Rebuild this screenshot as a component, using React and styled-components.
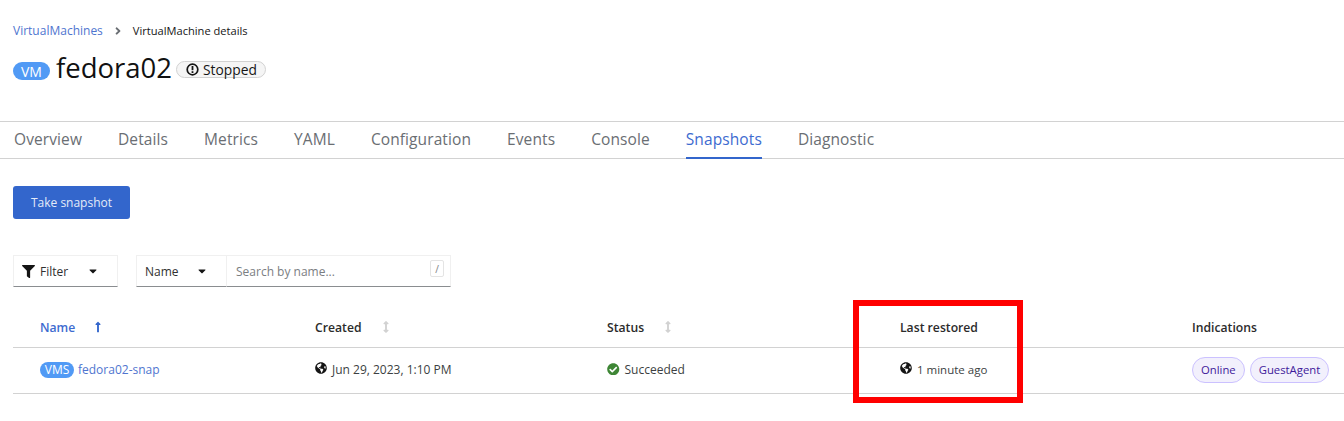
import styled, { createGlobalStyle } from 'styled-components';
import {
  FaAngleRight,
  FaArrowsAltV,
  FaCaretDown,
  FaCheckCircle,
  FaFilter,
  FaGlobeAmericas,
  FaLongArrowAltUp,
} from 'react-icons/fa';

const TABS = ['Overview', 'Details', 'Metrics', 'YAML', 'Configuration', 'Events', 'Console', 'Snapshots', 'Diagnostic'];

const GlobalStyle = createGlobalStyle`
  html, body {
    margin: 0;
    height: 100%;
    overflow: hidden;
    background: #fff;
    font-family: 'Open Sans', 'Liberation Sans', sans-serif;
    color: #151515;
  }
`;

const Page = styled.div`
  position: relative;
  width: 1344px;
  height: 421px;
  overflow: hidden;
`;

const Header = styled.header`
  height: 122px;
  box-sizing: border-box;
  padding: 22px 13px 0;
  border-bottom: 1px solid #d2d2d2;
`;

const Breadcrumb = styled.nav`
  display: flex;
  align-items: center;
  height: 17px;
  font-size: 11.1px;
`;

const CrumbLink = styled.a`
  color: #4f75cf;
  font-size: 12px;
`;

const CrumbSep = styled.span`
  display: flex;
  margin: 0 9px 0 9px;
  color: #6a6e73;
  font-size: 12px;
`;

const TitleRow = styled.div`
  display: flex;
  align-items: center;
  margin-top: 11px;
  height: 36px;
`;

const ResourceBadge = styled.span`
  display: inline-flex;
  align-items: center;
  justify-content: center;
  border-radius: 10px;
  background: #519af5;
  color: #fff;
  font-size: ${(props) => (props.$small ? '12px' : '14px')};
  width: ${(props) => (props.$small ? '34px' : '37px')};
  height: ${(props) => (props.$small ? '16px' : '18px')};
  margin-top: ${(props) => (props.$small ? '0' : '6px')};
`;

const Title = styled.h1`
  margin: 0 4px 0 6px;
  font-size: 27.5px;
  font-weight: 400;
  line-height: 36px;
  color: #111;
`;

const StatusPill = styled.span`
  display: inline-flex;
  align-items: center;
  gap: 4px;
  box-sizing: border-box;
  width: 90px;
  height: 17px;
  margin-top: 3px;
  padding-left: 9px;
  border: 1px solid #d2d2d2;
  border-radius: 9px;
  background: #f5f5f5;
  font-size: 13.8px;
`;

const Tabs = styled.nav`
  display: flex;
  height: 37px;
  box-sizing: border-box;
  padding-left: 14px;
  gap: 36px;
  border-bottom: 1px solid #d2d2d2;
`;

const Tab = styled.a`
  height: 37px;
  box-sizing: border-box;
  line-height: 35px;
  font-size: 15.5px;
  letter-spacing: 0.1px;
  color: ${(props) => (props.$active ? '#3d6bd0' : '#6a6e73')};
  border-bottom: ${(props) => (props.$active ? '2px solid #3366cc' : 'none')};
`;

const Content = styled.main`
  padding: 27px 0 0 13px;
`;

const PrimaryButton = styled.button`
  display: block;
  width: 117px;
  height: 33px;
  padding: 0;
  border: none;
  border-radius: 3px;
  background: #3366cc;
  color: #e4ebf8;
  font-family: inherit;
  font-size: 12px;
`;

const Toolbar = styled.div`
  display: flex;
  margin-top: 36px;
  gap: 18px;
`;

const SelectBox = styled.div`
  display: flex;
  align-items: center;
  box-sizing: border-box;
  height: 32px;
  width: ${(props) => props.$width}px;
  padding-left: ${(props) => props.$pad}px;
  font-size: 12px;
  color: #303030;
  border: 1px solid #f0f0f0;
  border-bottom: 1px solid #8a8d90;
`;

const FilterIcon = styled(FaFilter)`
  color: #151515;
  font-size: 13px;
  margin-right: 5px;
`;

const Caret = styled(FaCaretDown)`
  margin-left: auto;
  margin-right: ${(props) => props.$right}px;
  font-size: 12px;
  color: #151515;
`;

const SearchGroup = styled.div`
  display: flex;
`;

const SearchBox = styled.div`
  display: flex;
  align-items: center;
  justify-content: space-between;
  box-sizing: border-box;
  width: 224px;
  height: 32px;
  padding: 0 6px 0 9px;
  font-size: 12px;
  color: #7b7e82;
  border: 1px solid #f0f0f0;
  border-left: none;
  border-bottom: 1px solid #8a8d90;
`;

const KeyHint = styled.span`
  align-self: flex-start;
  display: flex;
  align-items: center;
  justify-content: center;
  box-sizing: border-box;
  width: 14px;
  height: 17px;
  margin-top: 4px;
  border: 1px solid #e4e4e4;
  border-radius: 2px;
  font-size: 10px;
`;

const TableRow = styled.div`
  display: grid;
  grid-template-columns: 275px 292px 293px 292px 1fr;
  align-items: center;
  box-sizing: border-box;
  height: ${(props) => props.$height}px;
  margin-top: ${(props) => props.$top || 0}px;
  padding-left: 27px;
  border-bottom: 1px solid #d2d2d2;
`;

const HeadCell = styled.div`
  display: flex;
  align-items: center;
  font-size: 12.2px;
  font-weight: 600;
  color: ${(props) => (props.$sorted ? '#3d6bd0' : '#2b2b2b')};
`;

const SortUp = styled(FaLongArrowAltUp)`
  margin-left: 17px;
  font-size: 12px;
  color: #3366cc;
`;

const SortIdle = styled(FaArrowsAltV)`
  margin-left: 18px;
  font-size: 12px;
  color: #d2d2d2;
`;

const BodyCell = styled.div`
  display: flex;
  align-items: center;
  gap: ${(props) => props.$gap || 5}px;
  margin-bottom: 2px;
  font-size: ${(props) => props.$size || 12}px;
  color: #3c3f42;
`;

const SnapLink = styled.a`
  color: #4f75cf;
`;

const Globe = styled(FaGlobeAmericas)`
  font-size: 12px;
  color: #151515;
  margin-bottom: 3px;
`;

const Check = styled(FaCheckCircle)`
  font-size: 12.5px;
  color: #3e8635;
  margin-bottom: 1px;
`;

const Label = styled.span`
  display: inline-flex;
  align-items: center;
  box-sizing: border-box;
  height: 26px;
  padding: 0 8px;
  border: 1px solid #cbc1ff;
  border-radius: 13px;
  background: #f2f0fc;
  color: #40199a;
  font-size: 11.3px;
`;

// red annotation drawn on top of the screenshot
const Highlight = styled.div`
  position: absolute;
  left: 853px;
  top: 300px;
  width: 170px;
  height: 103px;
  box-sizing: border-box;
  border: 6px solid #ff0000;
`;

const StoppedIcon = () => (
  <svg width="13" height="13" viewBox="0 0 13 13">
    <circle cx="6.5" cy="6.5" r="5.3" fill="none" stroke="#151515" strokeWidth="1.7" />
    <rect x="5.6" y="3" width="1.8" height="4.2" fill="#151515" />
    <rect x="5.6" y="8.2" width="1.8" height="1.8" fill="#151515" />
  </svg>
);

export default function App() {
  return (
    <Page>
      <GlobalStyle />
      <Header>
        <Breadcrumb>
          <CrumbLink>VirtualMachines</CrumbLink>
          <CrumbSep>
            <FaAngleRight />
          </CrumbSep>
          <span>VirtualMachine details</span>
        </Breadcrumb>
        <TitleRow>
          <ResourceBadge>VM</ResourceBadge>
          <Title>fedora02</Title>
          <StatusPill>
            <StoppedIcon />
            Stopped
          </StatusPill>
        </TitleRow>
      </Header>
      <Tabs>
        {TABS.map((tab) => (
          <Tab key={tab} $active={tab === 'Snapshots'}>
            {tab}
          </Tab>
        ))}
      </Tabs>
      <Content>
        <PrimaryButton>Take snapshot</PrimaryButton>
        <Toolbar>
          <SelectBox $width={105} $pad={8}>
            <FilterIcon />
            Filter
            <Caret $right={18} />
          </SelectBox>
          <SearchGroup>
            <SelectBox $width={91} $pad={8}>
              Name
              <Caret $right={18} />
            </SelectBox>
            <SearchBox>
              Search by name...
              <KeyHint>/</KeyHint>
            </SearchBox>
          </SearchGroup>
        </Toolbar>
        <TableRow $height={41} $top={20}>
          <HeadCell $sorted>
            Name
            <SortUp />
          </HeadCell>
          <HeadCell>
            Created
            <SortIdle />
          </HeadCell>
          <HeadCell>
            Status
            <SortIdle />
          </HeadCell>
          <HeadCell>Last restored</HeadCell>
          <HeadCell>Indications</HeadCell>
        </TableRow>
        <TableRow $height={46}>
          <BodyCell $gap={4}>
            <ResourceBadge $small>VMS</ResourceBadge>
            <SnapLink>fedora02-snap</SnapLink>
          </BodyCell>
          <BodyCell>
            <Globe />
            Jun 29, 2023, 1:10 PM
          </BodyCell>
          <BodyCell>
            <Check />
            Succeeded
          </BodyCell>
          <BodyCell $size={11.5}>
            <Globe />1 minute ago
          </BodyCell>
          <BodyCell>
            <Label>Online</Label>
            <Label>GuestAgent</Label>
          </BodyCell>
        </TableRow>
      </Content>
      <Highlight />
    </Page>
  );
}
